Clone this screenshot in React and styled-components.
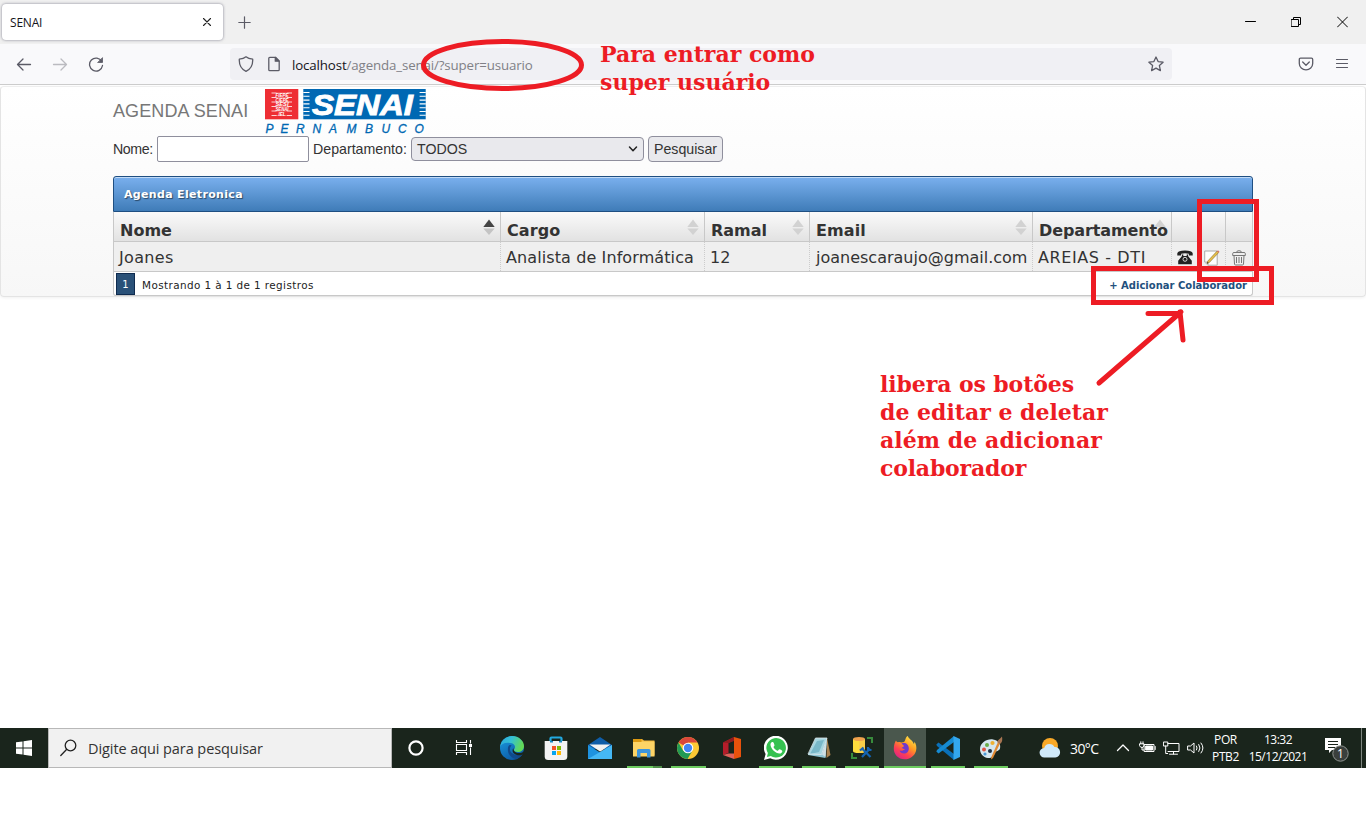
import React from "react";
import styled, { createGlobalStyle } from "styled-components";

const RED = "#ed1c24";
const UI_FONT = '"Open Sans", "Noto Sans", sans-serif';
const VERDANA = 'Verdana, "DejaVu Sans", sans-serif';
const ARIAL = '"Liberation Sans", Arial, sans-serif';

const Global = createGlobalStyle`
  *, *::before, *::after { box-sizing: border-box; }
  body { margin: 0; background: #fff; font-family: ${ARIAL}; overflow: hidden; }
`;

const Screen = styled.div`
  position: relative;
  width: 1366px;
  height: 826px;
  display: flex;
  flex-direction: column;
  background: #fff;
  white-space: nowrap;
`;

/* ---------- Browser ---------- */

const TabStrip = styled.header`
  height: 44px;
  flex: none;
  display: flex;
  align-items: flex-start;
  background: #f0f0f0;
  padding: 4px 0 0 2px;
`;
const Tab = styled.div`
  width: 221px;
  height: 36px;
  display: flex;
  align-items: center;
  justify-content: space-between;
  padding: 0 11px 0 8px;
  background: #fff;
  border-radius: 4px;
  box-shadow: 0 0 3px rgba(90, 90, 110, 0.75);
  font: 12px ${UI_FONT};
  letter-spacing: -0.2px;
  color: #15141a;
`;
const NewTab = styled.div`
  margin: 12px 0 0 15px;
  display: flex;
`;
const WindowButtons = styled.div`
  margin-left: auto;
  display: flex;
  gap: 35px;
  padding: 8px 18px 0 0;
`;
const Toolbar = styled.div`
  height: 41px;
  flex: none;
  display: flex;
  align-items: center;
  background: #f9f9fb;
  border-bottom: 1px solid #cccccc;
  padding: 0 16px;
`;
const NavButtons = styled.div`
  display: flex;
  gap: 20px;
  width: 214px;
`;
const AddressBar = styled.div`
  width: 942px;
  height: 32px;
  display: flex;
  align-items: center;
  gap: 12px;
  padding: 0 8px;
  background: #f0f0f4;
  border-radius: 4px;
`;
const Url = styled.div`
  flex: 1;
  margin-left: -2px;
  padding-top: 2px;
  font: 13.3px ${UI_FONT};
  letter-spacing: -0.13px;
  color: #808086;
  b { font-weight: 400; color: #15141a; }
`;
const ToolIcons = styled.div`
  margin-left: auto;
  display: flex;
  gap: 20px;
`;

/* ---------- Page ---------- */

const Page = styled.main`
  height: 211px;
  margin-top: 1px;
  flex: none;
  padding: 2px 112px 0;
  border: 1px solid #e4e4e4;
  border-top-color: #eee;
  border-radius: 4px;
  background: linear-gradient(#ffffff, #f7f7f7);
  box-shadow: 0 1px 3px rgba(0, 0, 0, 0.06);
`;
const Brand = styled.div`
  height: 47px;
  display: flex;
  gap: 17px;
  color: #777;
  font: 18px/44px ${ARIAL};
`;
const Title = styled.div`
  width: 135px;
  letter-spacing: 0.1px;
`;
const LogoArt = styled.svg`
  overflow: visible;
`;
const Search = styled.form`
  height: 26px;
  display: flex;
  align-items: center;
  font: 14.2px ${ARIAL};
  color: #333;
`;
const Label = styled.label`
  width: ${(p) => p.$w}px;
  letter-spacing: ${(p) => p.$ls || 0}px;
`;
const TextInput = styled.input`
  width: 152px;
  height: 26px;
  margin-right: 4px;
  border: 1px solid #8f8f9d;
  border-radius: 2px;
  background: #fff;
`;
const SelectBox = styled.div`
  width: 233px;
  height: 24px;
  display: flex;
  align-items: center;
  justify-content: space-between;
  padding: 0 5px;
  margin-right: 4px;
  border: 1px solid #8f8f9d;
  border-radius: 4px;
  background: #e9e9ed;
`;
const SearchButton = styled.button`
  width: 75px;
  height: 26px;
  padding: 0;
  border: 1px solid #8f8f9d;
  border-radius: 4px;
  background: #e9e9ed;
  color: #333;
  font: 14.2px ${ARIAL};
`;

const Grid = styled.section`
  margin-top: 14px;
  width: 1140px;
  font-family: ${VERDANA};
  color: #333;
`;
const GridTitle = styled.div`
  height: 36px;
  padding-left: 10px;
  border: 1px solid #1f4f82;
  border-radius: 3px 3px 0 0;
  background: linear-gradient(#7ab0ee, #3f7cb8);
  box-shadow: inset 0 1px 0 rgba(255, 255, 255, 0.55);
  color: #fff;
  font-weight: 700;
  font-size: 11px;
  line-height: 36px;
  letter-spacing: 0.33px;
  text-shadow: 1px 1px 1px rgba(0, 0, 0, 0.5);
`;
const Row = styled.div`
  display: grid;
  grid-template-columns: 387px 204px 105px 223px 139px 27px 27px 1fr;
  height: 30px;
  border: solid #c8c8c8;
  border-width: 0 1px 1px;
  background: ${(p) => (p.$head ? "linear-gradient(#fafafa, #e2e2e2)" : "#efefef")};
`;
const Cell = styled.div`
  display: flex;
  align-items: center;
  min-width: 0;
  padding: 2px 0 0 ${(p) => p.$pad || 5}px;
  border-right: 1px dotted #ccc;
  font-size: 16px;
  letter-spacing: ${(p) => p.$ls || 0}px;
  &:last-child { border-right: 0; }
`;
const HeadCell = styled(Cell)`
  position: relative;
  padding: 8px 0 0 6px;
  border-right: 1px solid #c8c8c8;
  font-weight: 700;
`;
const Sorter = styled.svg`
  position: absolute;
  right: 5px;
  top: 7px;
`;
const Name = styled.span`
  position: relative;
`;
const Footer = styled.div`
  height: 24px;
  display: flex;
  align-items: center;
  padding: 1px 4px 0 2px;
  border: solid #c8c8c8;
  border-width: 0 1px 1px;
  border-radius: 0 0 3px 3px;
  background: #fff;
  color: #222;
  font-size: 10px;
`;
const PageNumber = styled.div`
  width: 19px;
  height: 22px;
  margin-right: 7px;
  border: 1px solid #0f2b4f;
  background: #2a5178;
  color: #fff;
  line-height: 22px;
  text-align: center;
`;
const Count = styled.span`
  padding-top: 2px;
  font-size: 10.4px;
  letter-spacing: 0.42px;
`;
const AddLink = styled.a`
  margin-left: auto;
  padding: 2px 1px 0 0;
  color: #22507d;
  font-weight: 700;
`;

/* ---------- Annotations ---------- */

const Note = styled.p`
  position: absolute;
  left: ${(p) => p.$x}px;
  top: ${(p) => p.$y}px;
  margin: 0;
  color: ${RED};
  font: 700 22px/28px "DejaVu Serif", "Bookman Old Style", serif;
`;
const NoteLine = styled.span`
  display: block;
  width: max-content;
  letter-spacing: ${(p) => p.$ls || 0}px;
`;
const Frame = styled.div`
  position: absolute;
  left: ${(p) => p.$x}px;
  top: ${(p) => p.$y}px;
  width: ${(p) => p.$w}px;
  height: ${(p) => p.$h}px;
  border: 5px solid ${RED};
`;
const Ink = styled.svg`
  position: absolute;
  inset: 0;
  pointer-events: none;
`;

/* ---------- Taskbar ---------- */

const Taskbar = styled.footer`
  height: 40px;
  margin-top: auto;
  margin-bottom: 58px;
  flex: none;
  display: flex;
  background: #1a251c;
  color: #fff;
  font-family: ${UI_FONT};
`;
const StartButton = styled.div`
  width: 48px;
  display: grid;
  place-items: center;
`;
const TaskSearch = styled.div`
  width: 344px;
  display: flex;
  align-items: center;
  gap: 11px;
  padding-left: 11px;
  border: 1px solid #b8b8b8;
  background: #f1f1f1;
  color: #333;
  font-size: 14.5px;
  letter-spacing: -0.08px;
`;
const TaskButton = styled.div`
  width: ${(p) => p.$w}px;
  display: flex;
  flex-direction: column;
  align-items: center;
  padding-top: 8px;
  background: ${(p) => (p.$active ? "#4a574d" : "transparent")};
  margin-left: ${(p) => p.$ml || 0}px;
`;
const Running = styled.div`
  width: ${(p) => p.$w}px;
  height: 2px;
  margin-top: 6px;
  background: ${(p) => (p.$stacked ? "linear-gradient(90deg, #6ccb5f 26px, #4f8f49 26px)" : "#6ccb5f")};
`;
const Tray = styled.div`
  display: grid;
  grid-template-columns: 31px 46px 23px 24px 24px 23px 31px 74px 46px 1px;
  align-items: center;
  margin-left: 27px;
  height: 40px;
  font-size: 12px;
`;
const Temp = styled.span`
  font-size: 14px;
  letter-spacing: -0.6px;
`;
const TwoLine = styled.div`
  text-align: center;
  font-size: 12px;
  line-height: 17px;
  letter-spacing: ${(p) => p.$ls}px;
`;
const Divider = styled.div`
  height: 40px;
  background: #7d857f;
`;
const Notifications = styled.div`
  padding: 4px 0 0 9px;
  display: flex;
`;

const Line = ({ w = 16, h = 16, d, c = "#5b5b66", sw = 1.3, children }) => (
  <svg width={w} height={h} viewBox={`0 0 ${w} ${h}`} fill="none" stroke={c} strokeWidth={sw} strokeLinecap="round" strokeLinejoin="round">
    <path d={d} />
    {children}
  </svg>
);

const Logo = () => (
  <LogoArt width="162" height="47" viewBox="0 0 162 47">
    <rect width="33.3" height="30.3" fill="#ee2e34" />
    {[4, 8.5, 13, 17.5, 22, 26.5].map((y) => (
      <path key={y} d={`M6.500 ${y}h20.500`} stroke="#fff" strokeWidth=".8" />
    ))}
    <path d="M11.500 3h10.500v25h-10.500z" fill="#ee2e34" opacity=".6" />
    <g fill="#fff" fontFamily="Liberation Sans" fontWeight="700" fontStyle="italic" fontSize="5.2" textAnchor="middle">
      {["FIEPE", "CIEPE", "SESI", "SENAI", "IEL"].map((t, i) => (
        <text key={t} x="17" y={8 + i * 4.7} textLength={t.length > 3 ? 13 : 7} lengthAdjust="spacingAndGlyphs">{t}</text>
      ))}
    </g>
    <rect x="38.3" width="122.4" height="30.3" fill="#0068b3" />
    {[3.5, 7.3, 11.1, 14.9, 18.7, 22.5, 26.3].map((y) => (
      <path key={y} d={`M38.300 ${y}h6.200M154.600 ${y}h6.200`} stroke="#fff" strokeWidth="1.100" />
    ))}
    <text x="47" y="25.7" textLength="101" lengthAdjust="spacingAndGlyphs" fill="#fff" stroke="#fff" strokeWidth=".9" fontFamily="Liberation Sans" fontWeight="700" fontStyle="italic" fontSize="30">SENAI</text>
    <text y="44.3" x="0.5 15.5 31 47.5 64 81.500 100 116.500 133 149.500" fill="#0068b3" stroke="#0068b3" strokeWidth=".3" fontFamily="Liberation Sans" fontStyle="italic" fontSize="12">PERNAMBUCO</text>
  </LogoArt>
);

const Sort = ({ active, hideDown }) => (
  <Sorter width="12" height="18" viewBox="0 0 12 18">
    <path d="M.3 8L6 .5 11.700 8z" fill={active ? "#444" : "#d2d2d2"} />
    {!hideDown && <path d="M.3 9.500L6 16l5.700-6.500z" fill={active ? "#c4c4c4" : "#d2d2d2"} />}
  </Sorter>
);

const Phone = () => (
  <svg width="16" height="15" viewBox="0 0 16 15">
    <path d="M.3 5.500V3.200Q1 .5 8 .5t7.700 2.700V5.500H11.800V3.800Q8 2.800 4.200 3.800V5.500z" fill="#222" />
    <path d="M5 4.500h1.300v1.400h3.400V4.500H11v1.600l3.800 4.600v3.500H1.200v-3.500L5 6.100z" fill="#222" />
    <circle cx="8" cy="9.300" r="2" fill="none" stroke="#e4e4e4" strokeWidth=".9" />
  </svg>
);
const Edit = () => (
  <svg width="16" height="16" viewBox="0 0 16 16">
    <path d="M.7 1h12.500v14.200H4L.7 12z" fill="#fdfdfd" stroke="#aaa" />
    <path d="M.7 12H4v3.200" fill="#ddd" stroke="#aaa" strokeWidth=".8" />
    <path d="M3 13.500l.8-2.500L13 1.200l1.500 1.500L5.300 12.500z" fill="#e9c24a" stroke="#7d6426" strokeWidth=".6" />
    <path d="M13 1.200l1-1 1.500 1.500-1 1z" fill="#d87563" />
    <path d="M3 13.500l.5-1.500 1 1z" fill="#222" />
  </svg>
);
const Trash = () => (
  <svg width="14" height="16" viewBox="0 0 14 16" fill="none" stroke="#777" strokeWidth="1">
    <path d="M.7 5.500V3.500Q.7 2.500 2 2.500h10q1.300 0 1.300 1v2zM4.500 2.500Q4.500.7 7 .7t2.500 1.800M2 5.500l.5 8.500q.1 1 1 1h7q.9 0 1-1l.5-8.500M4.500 7v6M7 7v6M9.500 7v6" />
  </svg>
);

const Icon24 = ({ children }) => <svg width="24" height="24" viewBox="0 0 24 24">{children}</svg>;

const icons = {
  cortana: <Icon24><circle cx="12" cy="12" r="6.600" fill="none" stroke="#fff" strokeWidth="2.200" /></Icon24>,
  tasks: (
    <Icon24>
      <path d="M4.500 4v2.500h10V4M4.500 19v-2.500h10V19M4.500 8.500h10v6h-10zM18.500 4v3.500M18.500 11.500V19" fill="none" stroke="#fff" strokeWidth="1.100" />
      <path d="M17 8h3v3h-3z" fill="#fff" />
    </Icon24>
  ),
  edge: (
    <Icon24>
      <defs>
        <linearGradient id="e1" x1="0" y1="0" x2="1" y2=".3"><stop stopColor="#2aa7e0" /><stop offset=".5" stopColor="#35c1d4" /><stop offset="1" stopColor="#62d957" /></linearGradient>
        <linearGradient id="e2" x1="0" y1="0" x2=".6" y2="1"><stop stopColor="#1b9de2" /><stop offset="1" stopColor="#0c59a4" /></linearGradient>
      </defs>
      <circle cx="12" cy="12" r="12" fill="url(#e2)" />
      <path d="M0 11C1 4 6 0 12 0c7 0 12 5 12 10 0 4-3 6-6 6-3 0-4-1-4-2s1-1.500 1-3c0-2-2-4-5-4C5 6 1 8 0 11z" fill="url(#e1)" />
      <path d="M9.500 9C6 12 8 22 16 23c3-.8 5.500-2.800 7-5.300-1 .8-3 1.500-5 1.300-5 0-8.500-3-8-6.500.1-1.300 1-2.500 1.800-3.200z" fill="#114a8b" />
      <path d="M13.500 12c-.5 2.500 1.500 5 5.500 5 2 0 3.500-.5 4.500-1.500l1.500 1-1.500 1.500c-1.500 1-3.500 1.400-5.500 1.200-4-.4-7-3.700-4.500-7.200z" fill="#1a251c" />
    </Icon24>
  ),
  store: (
    <Icon24>
      <path d="M6.500 7V2.500q0-1 1-1h9q1 0 1 1V7" fill="none" stroke="#22a9e0" strokeWidth="2.200" />
      <path d="M.7 5h22.600v15.500q0 3.500-3.500 3.500H4.200Q.7 24 .7 20.500z" fill="#f3f3f3" />
      <path d="M6 5h3v1.500H6zM15 5h3v1.500h-3z" fill="#1687c0" />
      <path d="M8 10h4v4H8z" fill="#f35325" /><path d="M13 10h4v4h-4z" fill="#81bc06" />
      <path d="M8 15h4v4H8z" fill="#05a6f0" /><path d="M13 15h4v4h-4z" fill="#ffba08" />
    </Icon24>
  ),
  mail: (
    <Icon24>
      <path d="M0 9L12 1l12 8v4H0z" fill="#0f5da8" />
      <path d="M0 9l12 7.500L24 9v14H0z" fill="#1e93e0" />
      <path d="M0 23l24-14v14z" fill="#45b8f5" />
      <path d="M1.500 8.500h21L14 14.500l-2 1z" fill="#f2f2f2" />
    </Icon24>
  ),
  folder: (
    <Icon24>
      <path d="M1 3h9l2 1.500h10.500v15H1z" fill="#f3b73a" /><path d="M1 5.500h21.500v15H1z" fill="#fdd466" />
      <path d="M1 3h8.500v3H1z" fill="#dd9a12" />
      <path d="M5 21.500v-7q0-1.500 1.500-1.500h10.500q1.500 0 1.500 1.500v7H15V17H8.500v4.500z" fill="#3d95dc" />
    </Icon24>
  ),
  chrome: (
    <Icon24>
      <circle cx="12" cy="12" r="11" fill="#fcc934" />
      <path d="M12 12L2.500 6.500A11 11 0 0 1 21.500 6.500H12z" fill="#d9473b" />
      <path d="M2.500 6.500A11 11 0 0 0 11.500 23L16.500 14.500 12 17 7.200 14.700z" fill="#229a54" />
      <circle cx="12" cy="12" r="5.300" fill="#fff" /><circle cx="12" cy="12" r="4.200" fill="#4285f4" />
    </Icon24>
  ),
  office: (
    <Icon24>
      <path d="M3 6.500L14 1v3.500L8.500 7v10L3 19z" fill="#b51d2a" />
      <path d="M14 1l7 2v18l-7 2z" fill="#e8520c" /><path d="M3 19l5.500-1.500H14V23z" fill="#e0605a" />
      <path d="M14 1v4l-5.500 2L3 6.500z" fill="#8e1b20" />
    </Icon24>
  ),
  whatsapp: (
    <Icon24>
      <path d="M0 24l1.600-6A12 12 0 1 1 6.200 22.300z" fill="#fff" />
      <path d="M2.900 21l1-3.900A9.800 9.800 0 1 1 6.800 20z" fill="#35c150" />
      <path d="M8.300 6c-.7 0-2 1-1.800 3 .5 4 5 8.300 9 8.500 1.500 0 3-1.200 2.800-2.600-.1-.5-2.500-1.700-3-1.600-.6.2-1 1.500-1.600 1.500-1.400-.2-4-2.500-4.200-3.800 0-.5 1.100-1 1-1.800C10.400 8.500 9.500 6 9 6z" fill="#fff" />
    </Icon24>
  ),
  notepad: (
    <Icon24>
      <path d="M20 2l3.500 17-4 3z" fill="#a9824f" />
      <path d="M8.500 2H20l-1.500 20L1 19z" fill="#8fc5d3" />
      <path d="M9 2h11l-6 16.500L1 19z" fill="#a6d6e0" /><path d="M10 5l7-1-5 12-9 2z" fill="#67abbd" opacity=".7" />
      <path d="M8.500 2h11.500L14.500 18.500 1 18z" stroke="#dfe9ec" strokeWidth=".8" fill="none" />
      <path d="M20 2.500L15 18.500 18.500 21z" fill="#cfe0e4" />
    </Icon24>
  ),
  sql: (
    <Icon24>
      <path d="M3 3v12q0 2 6 2t6-2V3z" fill="#fddc3d" /><path d="M9 4v13q6 0 6-2V3z" fill="#f8cf4a" />
      <ellipse cx="9" cy="3" rx="6" ry="2" fill="#efa24d" />
      <path d="M17 2h5v5M2 17v5h5" fill="none" stroke="#388b3c" strokeWidth="2" />
      <path d="M12 21l8-8.500M12.500 13l8 8M10 14.500l3.500-3M18 11v3h3.500" fill="none" stroke="#1464b4" strokeWidth="2.200" />
    </Icon24>
  ),
  firefox: (
    <Icon24>
      <defs><linearGradient id="ff" x1=".85" y1="0" x2=".2" y2="1"><stop stopColor="#fff04c" /><stop offset=".4" stopColor="#ff9b23" /><stop offset=".7" stopColor="#ff4052" /><stop offset="1" stopColor="#d8208c" /></linearGradient></defs>
      <path d="M3 4.500c.5 1 1 1.500 2 1.800 1-.3 2-.2 3 .1L11 6c2-2 1-4.500 3.800-6 .7 3 5 4 6 8 .8-1 .7-2 .6-2.500C23 8 24 11 23 15c-1.500 5-6 8.300-11.300 8.300C5 23.300.6 18 .8 12.500.9 9 1.800 6 3 4.500z" fill="url(#ff)" />
      <path d="M8.500 7.500C12 6 15.800 8 15.800 12.500c0 3-2 5-4.800 5-2 0-4-1-4.500-3 2 .8 4 .2 5.500-1.500-2 0-2.500-.7-3.500-1l2.500-1.700c-.3-1.300-1.500-1.500-2.500-2.800z" fill="#7139cb" />
    </Icon24>
  ),
  vscode: (
    <Icon24>
      <path d="M.3 8.500L2.500 6.500 18 18v6L1 10z" fill="#0a70b8" /><path d="M.3 15.500l2.200 2L18 6V0L1 14z" fill="#168bd2" />
      <path d="M17.500 0L24 3v18l-6.500 3z" fill="#33a7ee" />
    </Icon24>
  ),
  paint: (
    <Icon24>
      <path d="M1 13C1 7 8 2.500 14 3.500c6 1 8 5 7 9-1 3-4 2-5 4-1 3-3 6-7 5.500C4 21.500 1 17.500 1 13z" fill="#d5e6ef" />
      <circle cx="11" cy="15" r="2" fill="#1c3045" /><circle cx="5" cy="13.500" r="2" fill="#e05545" />
      <circle cx="8" cy="9" r="2" fill="#69ad49" /><circle cx="13.500" cy="7" r="2.100" fill="#eeb033" /><circle cx="6" cy="18" r="1.600" fill="#4b99d5" />
      <path d="M19 6l2 1.500L14 22l-2 1.500.5-3z" fill="#e18a34" /><path d="M18 6c.5-2 3-3 5-5.500.5 3 .5 5.500-2 7.500z" fill="#a87552" />
    </Icon24>
  ),
};

const apps = [
  { id: "cortana", w: 48 }, { id: "tasks", w: 48 },
  { id: "edge", w: 44, ml: 2 }, { id: "store", w: 44 }, { id: "mail", w: 44 },
  { id: "folder", w: 44, run: 35, stacked: true }, { id: "chrome", w: 44, run: 35 },
  { id: "office", w: 44 }, { id: "whatsapp", w: 44, run: 34 },
  { id: "notepad", w: 42, run: 34 }, { id: "sql", w: 44, run: 34 },
  { id: "firefox", w: 42, run: 42, active: true }, { id: "vscode", w: 44, run: 34 }, { id: "paint", w: 42, run: 34 },
];

const headers = [
  { t: "Nome", sort: true, active: true }, { t: "Cargo", sort: true, ls: 0.1 }, { t: "Ramal", sort: true },
  { t: "Email", sort: true, ls: 0.1 }, { t: "Departamento", sort: true, hideDown: true, ls: -0.12 }, { t: "" }, { t: "" }, { t: "" },
];

export default function App() {
  return (
    <Screen>
      <Global />
      <TabStrip>
        <Tab>
          SENAI
          <Line w={10} h={10} c="#222" sw={1.1} d="M1.500 1.500l7 7M8.500 1.500l-7 7" />
        </Tab>
        <NewTab><Line w={13} h={13} sw={1.2} d="M6.500 .8v11.400M.8 6.500h11.400" /></NewTab>
        <WindowButtons>
          <Line w={11} h={20} c="#000" sw={1} d="M.5 9.500h10" />
          <Line w={11} h={20} c="#000" sw={1} d="M.5 7.500h7v7h-7zM2.500 7.500v-2h7v7h-2" />
          <Line w={11} h={20} c="#000" sw={1} d="M.5 5l10 10M10.500 5l-10 10" />
        </WindowButtons>
      </TabStrip>
      <Toolbar>
        <NavButtons>
          <Line d="M14.500 8.500H1.500M7 3L1.500 8.500 7 14" />
          <Line c="#bbbbc0" d="M1.500 8.500h13M9 3L14.500 8.500 9 14" />
          <Line d="M13.800 5.500A6.500 6.500 0 1 0 14.500 9.500"><path d="M14.500 2v4.500h-4.500z" fill="#5b5b66" strokeWidth=".8" /></Line>
        </NavButtons>
        <AddressBar>
          <Line d="M8 .8C6 2.500 3.500 3 1.300 3.200 1 9 3 13 8 15.300 13 13 15 9 14.700 3.200 12.500 3 10 2.500 8 .8z" />
          <Line d="M2.800 2.300q0-1 1-1h5.700l3.700 3.700v8.700q0 1-1 1H3.800q-1 0-1-1z"><path d="M9.300 1.500v3.700h3.700z" fill="#5b5b66" /></Line>
          <Url><b>localhost</b>/agenda_senai/?super=usuario</Url>
          <Line d="M8 1l2.100 4.600 5 .6-3.700 3.400 1 5L8 12.100 3.600 14.600l1-5L.9 6.200l5-.6z" />
        </AddressBar>
        <ToolIcons>
          <Line d="M2.500 2.200h11q1.200 0 1.200 1.200V7.500a6.700 6.300 0 0 1-13.400 0V3.400q0-1.200 1.200-1.200zM4.700 6L8 9.200 11.300 6" />
          <Line sw={1.2} d="M2.500 3.500h11M2.500 7.500h11M2.500 11.500h11" />
        </ToolIcons>
      </Toolbar>

      <Page>
        <Brand><Title>AGENDA SENAI</Title><Logo /></Brand>
        <Search>
          <Label $w={44} $ls={-0.4}>Nome:</Label>
          <TextInput />
          <Label $w={98}>Departamento:</Label>
          <SelectBox>TODOS<Line w={10} h={8} c="#222" sw={1.5} d="M1.500 2L5 5.700 8.500 2" /></SelectBox>
          <SearchButton type="button">Pesquisar</SearchButton>
        </Search>
        <Grid>
          <GridTitle>Agenda Eletronica</GridTitle>
          <Row $head>
            {headers.map((h, i) => (
              <HeadCell key={i} $ls={h.ls}>
                {h.sort && <Sort active={h.active} hideDown={h.hideDown} />}
                <Name>{h.t}</Name>
              </HeadCell>
            ))}
          </Row>
          <Row>
            <Cell $ls={0.35}>Joanes</Cell>
            <Cell $ls={0.1}>Analista de Informática</Cell>
            <Cell>12</Cell>
            <Cell $pad={6}>joanescaraujo@gmail.com</Cell>
            <Cell $ls={0.6}>AREIAS - DTI</Cell>
            <Cell><Phone /></Cell>
            <Cell><Edit /></Cell>
            <Cell $pad={6}><Trash /></Cell>
          </Row>
          <Footer>
            <PageNumber>1</PageNumber>
            <Count>Mostrando 1 à 1 de 1 registros</Count>
            <AddLink>+ Adicionar Colaborador</AddLink>
          </Footer>
        </Grid>
      </Page>

      <Taskbar>
        <StartButton>
          <svg width="16" height="16" viewBox="0 0 16 16" fill="#fff"><path d="M0 2.300L6.500 1.400V7.500H0zM7.500 1.200L16 0v7.500H7.500zM0 8.500h6.500v6.100L0 13.700zM7.500 8.500H16V16l-8.500-1.200z" /></svg>
        </StartButton>
        <TaskSearch>
          <Line w={17} h={18} c="#222" sw={1.3} d="M6.500 10.500L.8 16.500"><circle cx="10.500" cy="6.500" r="5.300" /></Line>
          Digite aqui para pesquisar
        </TaskSearch>
        {apps.map((a) => (
          <TaskButton key={a.id} $w={a.w} $ml={a.ml} $active={a.active}>
            {icons[a.id]}
            {a.run && <Running $w={a.run} $stacked={a.stacked} />}
          </TaskButton>
        ))}
        <Tray>
          <svg width="22" height="22" viewBox="0 0 22 22">
            <circle cx="11" cy="9" r="8" fill="#f9a928" />
            <path d="M5.500 20.500a4.800 4.800 0 0 1-.3-9.600 5.600 5.600 0 0 1 10.300-.8 5.200 5.200 0 0 1 .8 10.400z" fill="#cfe9fa" />
          </svg>
          <Temp>30°C</Temp>
          <Line w={14} h={10} c="#fff" d="M1.500 7.500L7 2l5.500 5.500" />
          <Line w={17} h={14} c="#fff" sw={1} d="M5.500 3.500h9.500v7H5.500zM16.200 5.500v3M1.800 .8v2M4 .8v2M.8 2.800h4.200v2.200l-1 1.300H1.800L.8 5zM3 6.500v2.500h2"><path d="M7 5h6.500v4H7z" fill="#fff" /></Line>
          <Line w={17} h={14} c="#fff" sw={1} d="M5 2.500h11v8H5M10.500 10.500v2.500M6.500 13.200h8M.8 1h4v4h-4zM2.700 5v7.500h2" />
          <Line w={18} h={14} c="#fff" sw={1} d="M1 5h2.500L7 2v10L3.500 9H1zM9.500 5q1.300 2 0 4M11.800 3.500q2.500 3.500 0 7M14 2q4 5 0 10" />
          <TwoLine $ls={-0.4}>POR<br />PTB2</TwoLine>
          <TwoLine $ls={-0.5}>13:32<br />15/12/2021</TwoLine>
          <Notifications>
            <svg width="26" height="26" viewBox="0 0 26 26">
              <path d="M1 1h16v12H8l-3 3v-3H1z" fill="#fff" />
              <path d="M4 4.500h10M4 7.500h10M4 10.500h7" stroke="#1a251c" />
              <circle cx="16.500" cy="16.500" r="7.700" fill="#3a3f3c" stroke="#8f9490" />
              <text x="16.500" y="20.800" textAnchor="middle" fill="#fff" fontSize="12" fontFamily="Open Sans">1</text>
            </svg>
          </Notifications>
          <Divider />
        </Tray>
      </Taskbar>

      <Note $x={600} $y={40}>
        <NoteLine>Para entrar como</NoteLine>
        <NoteLine>super usuário</NoteLine>
      </Note>
      <Note $x={880} $y={370}>
        <NoteLine $ls={-0.1}>libera os botões</NoteLine>
        <NoteLine>de editar e deletar</NoteLine>
        <NoteLine $ls={0.06}>além de adicionar</NoteLine>
        <NoteLine $ls={-0.2}>colaborador</NoteLine>
      </Note>
      <Frame $x={1197} $y={199} $w={62} $h={83} />
      <Frame $x={1091} $y={266} $w={183} $h={39} />
      <Ink width="1366" height="826" fill="none" stroke={RED} strokeWidth="5" strokeLinecap="round">
        <ellipse cx="502.500" cy="65" rx="79" ry="23.500" />
        <path d="M1099 383L1181 312M1148 313.500H1180M1180 312L1183 340" />
      </Ink>
    </Screen>
  );
}
